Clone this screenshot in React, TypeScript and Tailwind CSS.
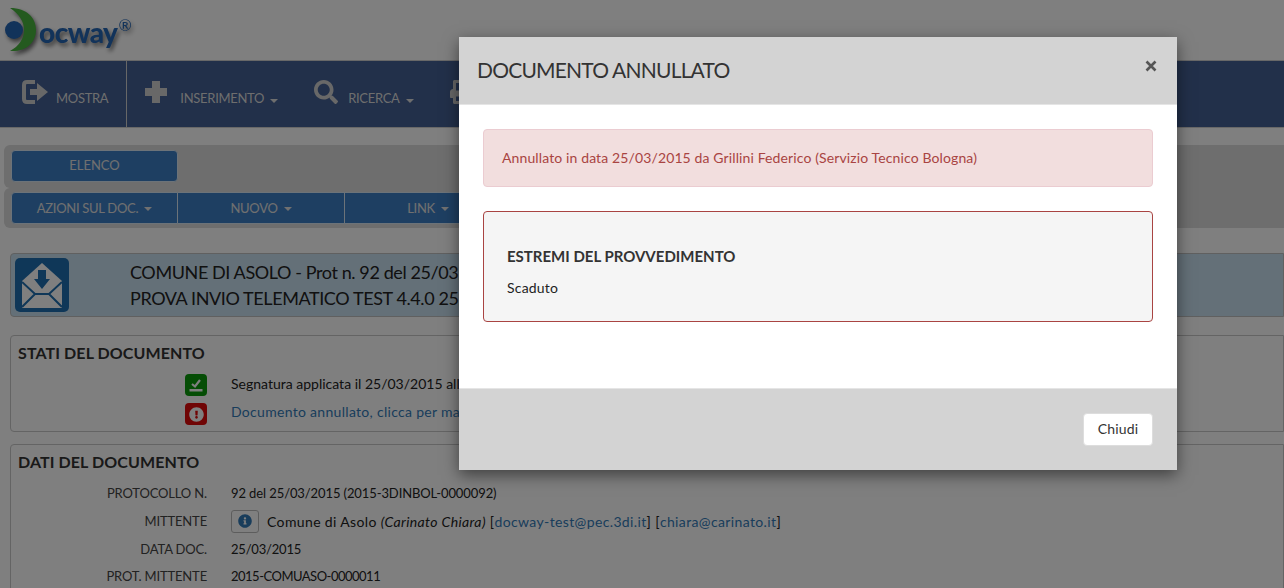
import { FC } from "react";
import { FaPrint, FaSearch, FaInfoCircle, FaExclamationCircle } from "react-icons/fa";

const font = "font-['Lato',sans-serif]";

const Caret: FC = () => (
  <span className="ml-[6px] inline-block w-0 h-0 border-x-[4px] border-x-transparent border-t-[4px] border-t-current align-middle"></span>
);

const Logo: FC = () => (
  <div className="flex items-center h-[60px] pl-[5px] drop-shadow-[2px_3px_2px_rgba(0,0,0,0.55)]">
    <svg width="32" height="44" viewBox="0 0 32 44" className="shrink-0">
      <circle cx="9" cy="22" r="9" fill="#2566b4" />
      <path d="M5 0 C22 0 31 10 31 22 C31 34 22 44 5 43 C14 38 19 31 19 22 C19 13 14 6 5 0 Z" fill="#48b43e" />
    </svg>
    <span className="ml-[2px] mt-[3px] text-[28px] font-black leading-none text-[#2566b4] tracking-[-0.5px]">ocway</span>
    <span className="ml-[1px] text-[16px] leading-none text-[#2566b4] self-start mt-[17px]">®</span>
  </div>
);

const NavItem: FC<{ icon: React.ReactNode; label: string; caret?: boolean }> = ({ icon, label, caret }) => (
  <div className="flex items-center text-[13px] tracking-[-0.3px] text-[#dcdcdc]">
    {icon}
    <span className="mt-[10px]">{label}</span>
    {caret && <span className="mt-[12px]"><Caret /></span>}
  </div>
);

const DataRow: FC<{ label: string; children: React.ReactNode; valueClass: string }> = ({ label, children, valueClass }) => (
  <div className="flex items-center">
    <div className="w-[189px] text-right text-[13px] tracking-[-0.15px] text-[#444]">{label}</div>
    <div className={`ml-[24px] text-[#222] whitespace-nowrap ${valueClass}`}>{children}</div>
  </div>
);

const App: FC = () => {
  return (
    <div className={`relative w-[1284px] h-[588px] overflow-hidden bg-white ${font}`}>
      {/* page behind the dialog */}
      <Logo />
      <nav className="flex items-center h-[68px] bg-[#446094] border-y border-[#d0d0d0]">
        <div className="flex items-center h-full pl-[22px] pr-[18px] border-r border-[#cfcfcf]">
          <NavItem
            icon={
              <svg width="26" height="24" viewBox="0 0 26 24" className="mr-[8px] -mt-[4px] text-[#d0d0d0]">
                <path d="M13 2 H5 Q2 2 2 5 V19 Q2 22 5 22 H13" fill="none" stroke="currentColor" strokeWidth="4" />
                <path d="M8 9 H15 V3 L26 12 L15 21 V15 H8 Z" fill="currentColor" />
              </svg>
            }
            label="MOSTRA"
          />
        </div>
        <div className="flex items-center gap-[36px] pl-[18px]">
          <NavItem
            icon={
              <svg width="22" height="22" viewBox="0 0 22 22" className="mr-[13px] -mt-[4px] text-[#d0d0d0]">
                <path d="M7 0 H15 V7 H22 V15 H15 V22 H7 V15 H0 V7 H7 Z" fill="currentColor" />
              </svg>
            }
            label="INSERIMENTO"
            caret
          />
          <NavItem icon={<FaSearch className="w-[24px] h-[24px] mr-[10px] -mt-[4px] text-[#d0d0d0]" />} label="RICERCA" caret />
          <NavItem icon={<FaPrint className="w-[24px] h-[24px] mr-[10px] -mt-[4px] text-[#d0d0d0]" />} label="STAMPA" />
        </div>
      </nav>

      <div className="mt-[17px] ml-[4px] flex flex-col">
        <div className="h-[43px] pt-[5px] pl-[7px] bg-[#dcdcdc] rounded-l-[6px]">
          <div className="w-[167px] h-[32px] flex items-center justify-center bg-[#3d7fc4] border border-[#d8e6f2] rounded-[4px] text-[13px] text-[#e0e0e0]">ELENCO</div>
        </div>
        <div className="h-[40px] pt-[4px] pl-[7px] flex bg-[#dcdcdc] rounded-l-[6px]">
          {["AZIONI SUL DOC.", "NUOVO", "LINK"].map((t) => (
            <div key={t} className="w-[167px] h-[32px] pt-[1px] flex items-center justify-center bg-[#3d7fc4] border-y border-r border-[#d8e6f2] first:border-l first:rounded-l-[4px] text-[13px] tracking-[-0.3px] text-[#e0e0e0]">
              {t}
              <Caret />
            </div>
          ))}
        </div>
      </div>

      <div className="mt-[25px] ml-[10px] h-[64px] flex items-center bg-[#c9e1f0] border border-[#c0c0c0] rounded-l-[4px] pl-[4px]">
        <div className="w-[54px] h-[54px] rounded-[5px] bg-[#1f6fb0] flex items-center justify-center shrink-0">
          <svg width="40" height="45" viewBox="0 0 40 45">
            <path d="M20 0 L40 18 V45 H0 V18 Z" fill="#fff" />
            <path d="M0 19 L13 31 H27 L40 19 M13 31 L0 44 M27 31 L40 44" stroke="#1f6fb0" strokeWidth="2" fill="none" />
            <path d="M16 7 H24 V16 H28 L20 26 L12 16 H16 Z" fill="#1f6fb0" />
          </svg>
        </div>
        <div className="ml-[61px] -mt-[1px] text-[18px] leading-[26px] text-[#222] tracking-[-0.4px] whitespace-nowrap">
          <div>COMUNE DI ASOLO - Prot n. 92 del 25/03/2015</div>
          <div>PROVA INVIO TELEMATICO TEST 4.4.0 25/03/2015</div>
        </div>
      </div>

      <section className="mt-[18px] ml-[10px] h-[97px] border border-[#c8c8c8] rounded-l-[4px] pl-[7px] pt-[6px]">
        <h2 className="text-[16px] font-bold text-[#333] leading-[22px] tracking-[0.1px]">STATI DEL DOCUMENTO</h2>
        <div className="mt-[10px] flex items-center">
          <div className="w-[189px] flex justify-end">
            <span className="w-[22px] h-[22px] rounded-[4px] bg-[#0a9a0a] flex items-center justify-center">
              <svg width="16" height="16" viewBox="0 0 16 16"><path d="M4 7 L7 9.500 L12 3" stroke="#fff" strokeWidth="2.200" fill="none" /><rect x="1.500" y="12" width="13" height="2.500" fill="#fff" /></svg>
            </span>
          </div>
          <span className="ml-[24px] -mt-[3px] text-[14px] text-[#222] whitespace-nowrap">Segnatura applicata il 25/03/2015 alle 12:00</span>
        </div>
        <div className="mt-[7px] flex items-center">
          <div className="w-[189px] flex justify-end">
            <span className="w-[22px] h-[22px] rounded-[4px] bg-[#e00a0a] flex items-center justify-center text-white">
              <FaExclamationCircle className="w-[15px] h-[15px]" />
            </span>
          </div>
          <span className="ml-[24px] -mt-[5px] text-[14px] tracking-[0.3px] text-[#337ab7] whitespace-nowrap">Documento annullato, clicca per maggiori dettagli</span>
        </div>
      </section>

      <section className="mt-[12px] ml-[10px] h-[160px] border border-[#c8c8c8] rounded-l-[4px] pl-[7px] pt-[6px]">
        <h2 className="text-[16px] font-bold text-[#333] leading-[22px] tracking-[0.1px]">DATI DEL DOCUMENTO</h2>
        <div className="mt-[7px] flex flex-col">
          <div className="h-[27px] flex items-center"><DataRow label="PROTOCOLLO N." valueClass="text-[13px] tracking-[-0.1px]">92 del 25/03/2015 (2015-3DINBOL-0000092)</DataRow></div>
          <div className="h-[29px] flex items-center">
            <DataRow label="MITTENTE" valueClass="text-[14px] tracking-[0.37px]">
              <span className="inline-flex items-center">
                <span className="w-[28px] h-[23px] mr-[8px] border border-[#bbb] rounded-[3px] flex items-center justify-center text-[#337ab7]"><FaInfoCircle className="w-[14px] h-[14px]" /></span>
                Comune di Asolo&nbsp;<em>(Carinato Chiara)</em>&nbsp;[<span className="text-[#337ab7]">docway-test@pec.3di.it</span>]&nbsp;[<span className="text-[#337ab7]">chiara@carinato.it</span>]
              </span>
            </DataRow>
          </div>
          <div className="h-[27px] flex items-center"><DataRow label="DATA DOC." valueClass="text-[13px] tracking-[-0.2px]">25/03/2015</DataRow></div>
          <div className="h-[27px] flex items-center"><DataRow label="PROT. MITTENTE" valueClass="text-[13px] tracking-[-0.5px]">2015-COMUASO-0000011</DataRow></div>
        </div>
      </section>

      {/* overlay */}
      <div className="absolute inset-0 bg-black/50"></div>

      {/* dialog */}
      <div className="absolute left-[459px] top-[37px] w-[718px] h-[433px] flex flex-col bg-white shadow-[0_5px_15px_rgba(0,0,0,0.5)]">
        <header className="h-[68px] flex items-center justify-between pl-[18px] pr-[19px] bg-[#d3d3d3] border-b border-[#e5e5e5]">
          <h1 className="text-[21px] tracking-[-0.8px] -mt-[1px] text-[#333]">DOCUMENTO ANNULLATO</h1>
          <svg width="12" height="12" viewBox="0 0 12 12" className="-mt-[9px] mr-[1px]"><path d="M1.500 1.500 L10.500 10.500 M10.500 1.500 L1.500 10.500" stroke="#555" strokeWidth="2.600" /></svg>
        </header>
        <div className="flex-1 px-[24px] pt-[24px]">
          <div className="h-[58px] pb-[2px] flex items-center pl-[18px] bg-[#f2dede] border border-[#ebccd1] rounded-[4px] text-[14px] tracking-[0.12px] text-[#a94442]">
            Annullato in data 25/03/2015 da Grillini Federico (Servizio Tecnico Bologna)
          </div>
          <div className="mt-[24px] h-[111px] pl-[23px] pt-[33px] bg-[#f5f5f5] border border-[#a94442] rounded-[4px] text-[#333]">
            <h3 className="text-[15px] leading-[22px] font-bold">ESTREMI DEL PROVVEDIMENTO</h3>
            <p className="mt-[11px] text-[14px] leading-[20px] tracking-[0.2px] text-[#222]">Scaduto</p>
          </div>
        </div>
        <footer className="h-[82px] flex justify-end pt-[24px] pr-[24px] bg-[#d3d3d3] border-t border-[#e5e5e5]">
          <button className="w-[70px] h-[33px] pb-[2px] bg-white border border-[#ddd] rounded-[4px] text-[14px] tracking-[0.2px] text-[#333]">Chiudi</button>
        </footer>
      </div>
    </div>
  );
};

export default App;
